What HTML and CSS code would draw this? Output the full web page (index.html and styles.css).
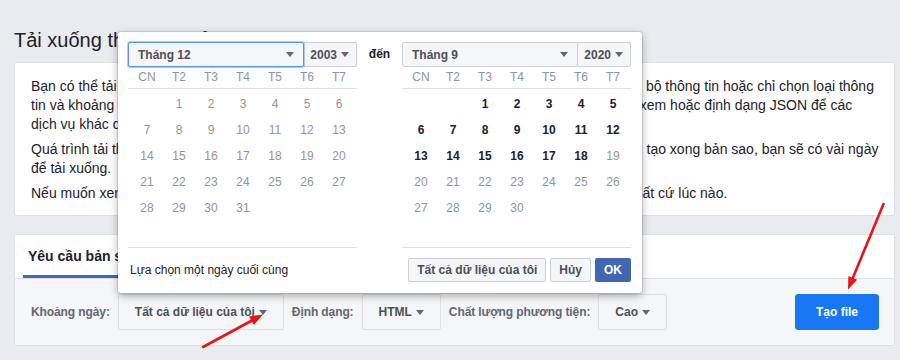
FILE: index.html
```html
<!DOCTYPE html>
<html lang="vi">
<head>
<meta charset="utf-8">
<title>Tải xuống thông tin của bạn</title>
<link rel="stylesheet" href="styles.css">
</head>
<body>
<div class="page">
  <h1 class="title">Tải xuống thông tin của bạn</h1>
  <div class="card intro">
    <p>Bạn có thể tải xuống bản sao thông tin trên Facebook của mình bất cứ lúc nào. Bạn có thể tải toàn bộ thông tin hoặc chỉ chọn loại thông<br>tin và khoảng ngày bạn muốn tải xuống. Bạn có thể chọn nhận thông tin đó ở định dạng HTML để xem hoặc định dạng JSON để các<br>dịch vụ khác dễ dàng nhập thông tin hơn.</p>
    <p>Quá trình tải thông tin được bảo vệ bằng mật khẩu và chỉ bạn có quyền truy cập. Sau khi chúng tôi tạo xong bản sao, bạn sẽ có vài ngày<br>để tải xuống.</p>
    <p>Nếu muốn xem các thông tin mà không cần tải xuống, bạn có thể truy cập vào Thông tin của bạn bất cứ lúc nào.</p>
  </div>
  <div class="card request">
    <div class="tabs">
      <div class="tab active">Yêu cầu bản sao</div>
      <div class="tab">Bản sao có sẵn</div>
    </div>
    <div class="controls">
      <span class="label">Khoảng ngày:</span>
      <button class="dd">Tất cả dữ liệu của tôi<i class="caret"></i></button>
      <span class="label">Định dạng:</span>
      <button class="dd">HTML<i class="caret"></i></button>
      <span class="label">Chất lượng phương tiện:</span>
      <button class="dd">Cao<i class="caret"></i></button>
      <button class="primary">Tạo file</button>
    </div>
  </div>
</div>

<div class="popup">
  <div class="cals">
    <div class="cal">
      <div class="selects">
        <div class="sel month focus">Tháng 12<i class="caret"></i></div>
        <div class="sel year">2003<i class="caret"></i></div>
      </div>
      <div class="dow"><span>CN</span><span>T2</span><span>T3</span><span>T4</span><span>T5</span><span>T6</span><span>T7</span></div>
      <div class="days">
        <span></span><span>1</span><span>2</span><span>3</span><span>4</span><span>5</span><span>6</span>
        <span>7</span><span>8</span><span>9</span><span>10</span><span>11</span><span>12</span><span>13</span>
        <span>14</span><span>15</span><span>16</span><span>17</span><span>18</span><span>19</span><span>20</span>
        <span>21</span><span>22</span><span>23</span><span>24</span><span>25</span><span>26</span><span>27</span>
        <span>28</span><span>29</span><span>30</span><span>31</span>
      </div>
    </div>
    <div class="to">đến</div>
    <div class="cal">
      <div class="selects">
        <div class="sel month">Tháng 9<i class="caret"></i></div>
        <div class="sel year">2020<i class="caret"></i></div>
      </div>
      <div class="dow"><span>CN</span><span>T2</span><span>T3</span><span>T4</span><span>T5</span><span>T6</span><span>T7</span></div>
      <div class="days">
        <span></span><span></span><b>1</b><b>2</b><b>3</b><b>4</b><b>5</b>
        <b>6</b><b>7</b><b>8</b><b>9</b><b>10</b><b>11</b><b>12</b>
        <b>13</b><b>14</b><b>15</b><b>16</b><b>17</b><b>18</b><span>19</span>
        <span>20</span><span>21</span><span>22</span><span>23</span><span>24</span><span>25</span><span>26</span>
        <span>27</span><span>28</span><span>29</span><span>30</span>
      </div>
    </div>
  </div>
  <div class="foot">
    <span class="hint">Lựa chọn một ngày cuối cùng</span>
    <div class="btns">
      <button class="btn">Tất cả dữ liệu của tôi</button>
      <button class="btn">Hủy</button>
      <button class="btn ok">OK</button>
    </div>
  </div>
</div>

<svg class="arrows" width="900" height="360" viewBox="0 0 900 360">
  <line x1="203" y1="347" x2="252" y2="320.5" stroke="#e8141c" stroke-width="2.6" stroke-linecap="round"/>
  <polygon points="263,314.5 253.8,325 249,316.4" fill="#e8141c"/>
  <line x1="883.5" y1="204" x2="852.8" y2="278" stroke="#e8141c" stroke-width="2.6" stroke-linecap="round"/>
  <polygon points="848,289.5 857.2,279.8 848.4,276" fill="#e8141c"/>
</svg>
</body>
</html>
```

FILE: styles.css
```css
* { box-sizing: border-box; }
html, body { margin: 0; padding: 0; }
body {
  width: 900px;
  height: 360px;
  overflow: hidden;
  background: #e9ebee;
  font-family: "Liberation Sans", Arial, sans-serif;
  color: #1d2129;
  position: relative;
}
button { font-family: inherit; cursor: pointer; }

.page { padding: 28px 5px 0 14px; }

.title {
  margin: 0 0 10px;
  font-size: 20px;
  line-height: 24px;
  font-weight: normal;
  color: #1d2129;
  white-space: nowrap;
}

.card {
  background: #fff;
  border: 1px solid #dddfe2;
  border-radius: 3px;
}

.intro { padding: 14px 16px 12px; overflow: hidden; }
.intro p {
  margin: 0 0 6px;
  font-size: 14px;
  line-height: 19px;
  white-space: nowrap;
}
.intro p:last-child { margin-bottom: 0; }

.request { margin-top: 18px; overflow: hidden; }

.tabs {
  display: flex;
  height: 43px;
  padding-left: 8px;
  background: #fff;
}
.tab {
  padding: 0 5px;
  margin-right: 20px;
  font-size: 14px;
  font-weight: bold;
  color: #1d2129;
  line-height: 43px;
  white-space: nowrap;
}
.tab.active { box-shadow: inset 0 -3px 0 #4267b2; }

.controls {
  display: flex;
  align-items: center;
  gap: 8px;
  height: 67px;
  padding: 0 15px 0 16px;
  background: #f5f6f7;
  border-top: 1px solid #dddfe2;
}
.label {
  font-size: 12px;
  font-weight: bold;
  letter-spacing: -0.1px;
  color: #606770;
  white-space: nowrap;
}
.dd {
  display: flex;
  align-items: center;
  height: 36px;
  padding: 0 16px;
  background: #f5f6f7;
  border: 1px solid #dddfe2;
  border-radius: 2px;
  font-size: 12px;
  font-weight: bold;
  color: #4b4f56;
  white-space: nowrap;
}
.caret {
  display: inline-block;
  width: 0;
  height: 0;
  margin-left: 4px;
  border-left: 4.5px solid transparent;
  border-right: 4.5px solid transparent;
  border-top: 5px solid #606770;
}
.primary {
  margin-left: auto;
  height: 36px;
  padding: 0 20px;
  background: #1877f2;
  border: 1px solid #1877f2;
  border-radius: 3px;
  color: #fff;
  font-size: 12px;
  font-weight: bold;
}

/* popup */
.popup {
  position: absolute;
  left: 118px;
  top: 32px;
  width: 524px;
  height: 261px;
  padding: 10px 11px 11px 10px;
  background: #fff;
  border-radius: 3px;
  box-shadow: 0 0 0 1px rgba(0,0,0,.1), 0 3px 8px rgba(0,0,0,.3);
}
.cals { display: flex; }
.cal { width: 229px; }
.to {
  width: 45px;
  height: 25px;
  line-height: 25px;
  text-align: center;
  font-size: 12px;
  font-weight: bold;
  color: #1d2129;
}
.selects { display: flex; height: 25px; }
.sel {
  display: flex;
  align-items: center;
  height: 25px;
  background: #f5f6f7;
  border: 1px solid #ccd0d5;
  border-radius: 2px;
  font-size: 12px;
  font-weight: bold;
  color: #4b4f56;
  white-space: nowrap;
}
.sel .caret { margin-left: auto; border-top-color: #606770; }
.sel.month { flex: 1; padding: 0 9px; }
.sel.year { padding: 0 7px 0 6px; margin-left: -1px; }
.sel.year .caret { margin-left: 4px; }
.sel.focus {
  border-color: #5b8ff5;
  box-shadow: 0 0 0 1px rgba(91,143,245,.45);
  position: relative;
  z-index: 1;
}

.dow, .days {
  display: grid;
  grid-template-columns: repeat(7, 32px);
  padding: 0 2px 0 3px;
  font-size: 12px;
  text-align: center;
  border-bottom: 1px solid #dddfe2;
}
.dow {
  height: 22px;
  line-height: 21px;
  color: #90949c;
}
.days {
  grid-auto-rows: 26px;
  height: 159px;
  padding-top: 2px;
  color: #90949c;
}
.days span, .days b { line-height: 26px; }
.days b { color: #1d2129; font-weight: bold; }

.foot {
  display: flex;
  align-items: center;
  justify-content: space-between;
  padding-top: 10px;
}
.hint { font-size: 12px; color: #1d2129; padding-left: 2px; }
.btns { display: flex; gap: 4px; }
.btn {
  height: 24px;
  padding: 0 8px;
  background: #f5f6f7;
  border: 1px solid #ccd0d5;
  border-radius: 2px;
  font-size: 12px;
  font-weight: bold;
  color: #4b4f56;
}
.btn.ok { background: #4267b2; border-color: #4267b2; color: #fff; }

.arrows {
  position: absolute;
  left: 0;
  top: 0;
  pointer-events: none;
}
```
